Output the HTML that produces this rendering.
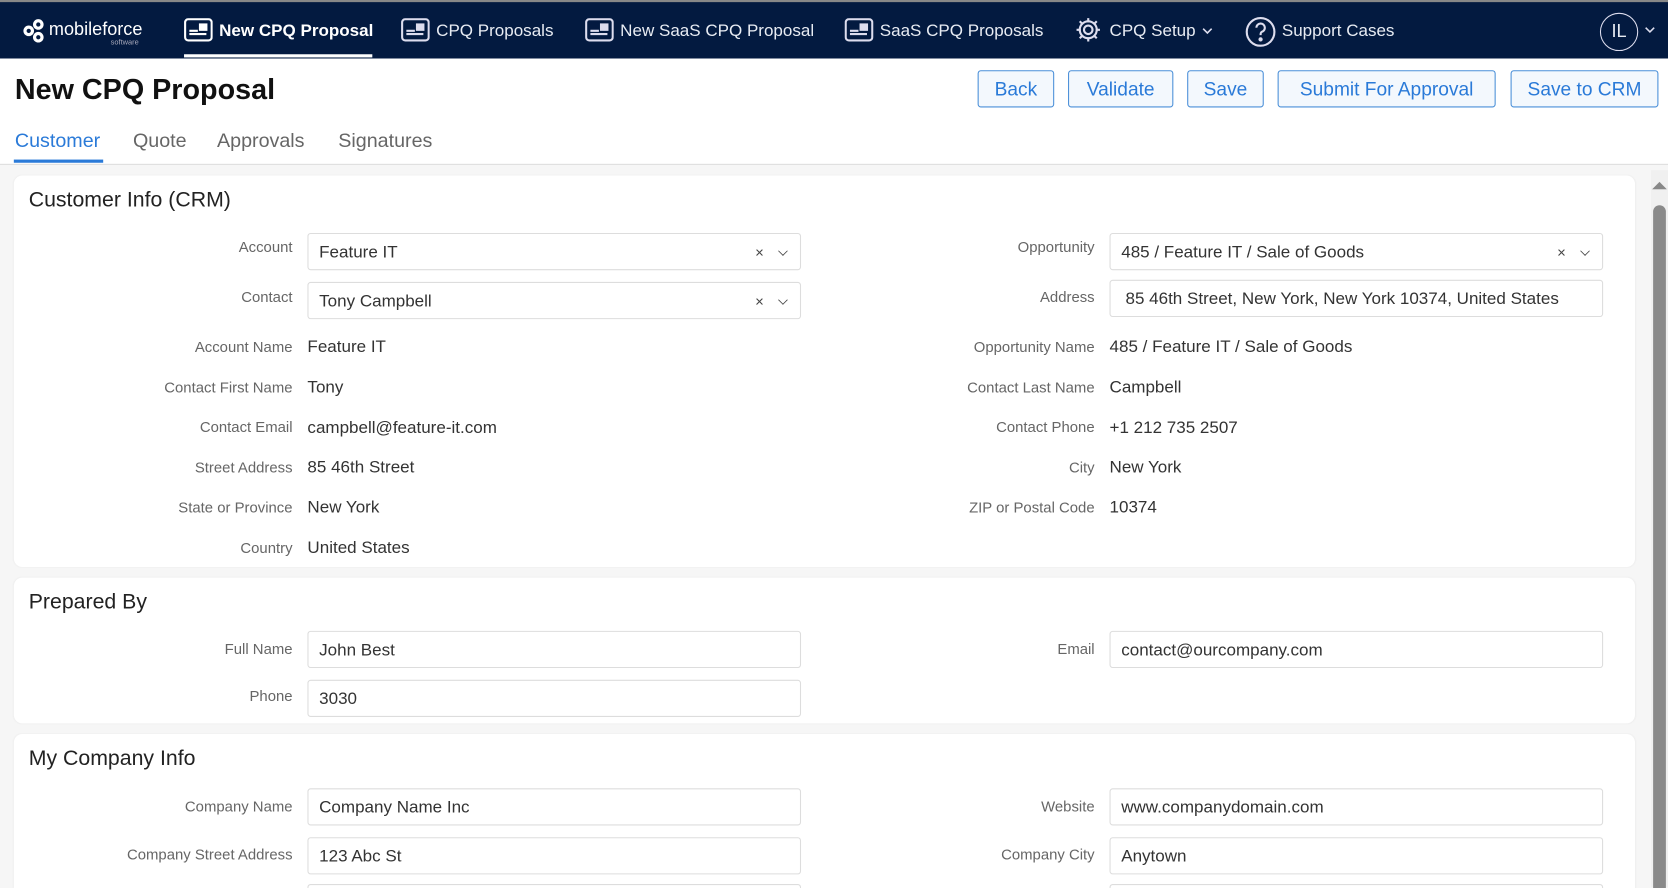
<!DOCTYPE html>
<html><head><meta charset="utf-8">
<style>
*{box-sizing:border-box;margin:0;padding:0}
html,body{width:1668px;height:888px;overflow:hidden;background:#f6f6f6}
#w{position:absolute;left:0;top:0;width:1568px;height:834.7px;transform:scale(1.06378);transform-origin:0 0;font-family:"Liberation Sans",sans-serif;background:#f6f6f6;overflow:hidden}
.nav{position:absolute;left:0;top:0;width:1568px;height:55px;background:#031a40;color:#e8ecf3;font-size:16px;border-top:2px solid #888}
.nav .it{position:absolute;top:19px;white-space:nowrap}
.nav svg{position:absolute}
.hdr{position:absolute;left:0;top:55px;width:1568px;height:100px;background:#fff;border-bottom:1px solid #ddd}
h1{position:absolute;left:14px;top:69px;font-size:27px;font-weight:bold;color:#111}
.btn{position:absolute;top:66px;height:35px;border:1px solid #4a8fd8;border-radius:3px;background:#f3f8fd;color:#2a7ad8;font-size:18px;text-align:center;line-height:35px}
.tab{position:absolute;top:121px;font-size:18.5px;color:#666}
.card{position:absolute;left:13px;width:1524px;background:#fff;border-radius:8px;box-shadow:0 0 2px rgba(0,0,0,.06)}
.card h2{position:absolute;left:14px;font-size:20px;font-weight:normal;color:#222}
.l{position:absolute;font-size:14px;color:#666;text-align:right;width:250px}
.v{position:absolute;font-size:16px;color:#333;margin-top:2px}
.in{position:absolute;height:35px;border:1px solid #ddd;border-radius:3px;background:#fff;font-size:16px;color:#333;padding-left:10px;line-height:35px}
.x{position:absolute;right:34px;top:0;font-size:14px;color:#444}
.ch{position:absolute;right:12px;top:12px;width:8px;height:8px;border-right:1.5px solid #444;border-bottom:1.5px solid #444;transform:rotate(45deg) scale(.8)}
</style></head><body><div id="w">
<div class="nav">
 <svg style="left:20px;top:15px" width="26" height="24" viewBox="0 0 26 24" fill="none" stroke="#fff" stroke-width="3"><circle cx="7" cy="12" r="3.5"/><circle cx="16" cy="6" r="3.5"/><circle cx="16" cy="18" r="3.5"/></svg>
 <div class="it" style="left:46px;top:16px;font-size:17px;color:#fff">mobileforce</div>
 <div class="it" style="left:104px;top:35px;font-size:7px;color:#aab">software</div>
 <svg style="left:173px;top:15px" width="27" height="22" viewBox="0 0 27 22" fill="none" stroke="#fff" stroke-width="2"><rect x="1" y="1" width="25" height="20" rx="3"/><rect x="15" y="6" width="6" height="5" fill="#fff"/><path d="M5 12h8M5 15h16"/></svg>
 <div class="it" style="left:206px;font-weight:bold;color:#fff">New CPQ Proposal</div>
 <div style="position:absolute;left:173px;top:49px;width:177px;height:3px;background:#fff"></div>
 <svg style="left:377px;top:15px" width="27" height="22" viewBox="0 0 27 22" fill="none" stroke="#dde" stroke-width="2"><rect x="1" y="1" width="25" height="20" rx="3"/><rect x="15" y="6" width="6" height="5" fill="#dde"/><path d="M5 12h8M5 15h16"/></svg>
 <div class="it" style="left:410px">CPQ Proposals</div>
 <svg style="left:550px;top:15px" width="27" height="22" viewBox="0 0 27 22" fill="none" stroke="#dde" stroke-width="2"><rect x="1" y="1" width="25" height="20" rx="3"/><rect x="15" y="6" width="6" height="5" fill="#dde"/><path d="M5 12h8M5 15h16"/></svg>
 <div class="it" style="left:583px">New SaaS CPQ Proposal</div>
 <svg style="left:794px;top:15px" width="27" height="22" viewBox="0 0 27 22" fill="none" stroke="#dde" stroke-width="2"><rect x="1" y="1" width="25" height="20" rx="3"/><rect x="15" y="6" width="6" height="5" fill="#dde"/><path d="M5 12h8M5 15h16"/></svg>
 <div class="it" style="left:827px">SaaS CPQ Proposals</div>
 <svg style="left:1010px;top:13px" width="26" height="26" viewBox="0 0 26 26" fill="none" stroke="#dde" stroke-width="2"><circle cx="13" cy="13" r="4"/><path d="M13 2v4M13 20v4M2 13h4M20 13h4M5 5l3 3M18 18l3 3M5 21l3-3M18 8l3-3"/><circle cx="13" cy="13" r="8"/></svg>
 <div class="it" style="left:1043px">CPQ Setup</div>
 <svg style="left:1130px;top:24px" width="10" height="7" viewBox="0 0 10 7" fill="none" stroke="#dde" stroke-width="1.5"><path d="M1 1l4 4 4-4"/></svg>
 <svg style="left:1170px;top:13px" width="30" height="30" viewBox="0 0 30 30" fill="none" stroke="#dde" stroke-width="2"><circle cx="15" cy="15" r="13"/><path d="M11 11a4 4 0 1 1 5 4c-1 .5-1 1.5-1 3"/><circle cx="15" cy="22" r="1" fill="#dde"/></svg>
 <div class="it" style="left:1205px">Support Cases</div>
 <div style="position:absolute;left:1504px;top:10px;width:36px;height:36px;border:1.5px solid #dde;border-radius:50%;text-align:center;line-height:33px;font-size:17px">IL</div>
 <svg style="left:1546px;top:23px" width="10" height="7" viewBox="0 0 10 7" fill="none" stroke="#dde" stroke-width="1.5"><path d="M1 1l4 4 4-4"/></svg>
</div>
<div class="hdr"></div>
<h1>New CPQ Proposal</h1>
<div class="btn" style="left:919px;width:72px">Back</div>
<div class="btn" style="left:1004px;width:99px">Validate</div>
<div class="btn" style="left:1116px;width:72px">Save</div>
<div class="btn" style="left:1201px;width:205px">Submit For Approval</div>
<div class="btn" style="left:1420px;width:139px">Save to CRM</div>
<div class="tab" style="left:14px;color:#2a7ad8">Customer</div>
<div style="position:absolute;left:13px;top:150px;width:84px;height:3px;background:#2a7ad8"></div>
<div class="tab" style="left:125px">Quote</div>
<div class="tab" style="left:204px">Approvals</div>
<div class="tab" style="left:318px">Signatures</div>
<div style="position:absolute;left:1552px;top:160px;width:16px;height:674px;background:#f0f0f0"></div>
<svg style="position:absolute;left:1553px;top:170px" width="14" height="8"><path d="M0 8L7 1 14 8z" fill="#888"/></svg>
<div style="position:absolute;left:1554px;top:193px;width:12px;height:642px;background:#8a8a8a;border-radius:6px 6px 0 0"></div>

<div class="card" style="top:165px;height:368px">
 <h2 style="top:12px">Customer Info (CRM)</h2>
 <div class="l" style="left:12px;top:59px">Account</div>
 <div class="in" style="left:276px;top:54px;width:464px">Feature IT<span class="x">×</span><span class="ch"></span></div>
 <div class="l" style="left:12px;top:106px">Contact</div>
 <div class="in" style="left:276px;top:100px;width:464px">Tony Campbell<span class="x">×</span><span class="ch"></span></div>
 <div class="l" style="left:766px;top:59px">Opportunity</div>
 <div class="in" style="left:1030px;top:54px;width:464px">485 / Feature IT / Sale of Goods<span class="x">×</span><span class="ch"></span></div>
 <div class="l" style="left:766px;top:106px">Address</div>
 <div class="in" style="left:1030px;top:98px;width:464px;padding-left:14px">85 46th Street, New York, New York 10374, United States</div>
 <div class="l" style="left:12px;top:153px">Account Name</div><div class="v" style="left:276px;top:151px">Feature IT</div>
 <div class="l" style="left:12px;top:191px">Contact First Name</div><div class="v" style="left:276px;top:189px">Tony</div>
 <div class="l" style="left:12px;top:228px">Contact Email</div><div class="v" style="left:276px;top:227px">campbell@feature-it.com</div>
 <div class="l" style="left:12px;top:266px">Street Address</div><div class="v" style="left:276px;top:264px">85 46th Street</div>
 <div class="l" style="left:12px;top:304px">State or Province</div><div class="v" style="left:276px;top:302px">New York</div>
 <div class="l" style="left:12px;top:342px">Country</div><div class="v" style="left:276px;top:340px">United States</div>
 <div class="l" style="left:766px;top:153px">Opportunity Name</div><div class="v" style="left:1030px;top:151px">485 / Feature IT / Sale of Goods</div>
 <div class="l" style="left:766px;top:191px">Contact Last Name</div><div class="v" style="left:1030px;top:189px">Campbell</div>
 <div class="l" style="left:766px;top:228px">Contact Phone</div><div class="v" style="left:1030px;top:227px">+1 212 735 2507</div>
 <div class="l" style="left:766px;top:266px">City</div><div class="v" style="left:1030px;top:264px">New York</div>
 <div class="l" style="left:766px;top:304px">ZIP or Postal Code</div><div class="v" style="left:1030px;top:302px">10374</div>
</div>

<div class="card" style="top:543px;height:137px">
 <h2 style="top:12px">Prepared By</h2>
 <div class="l" style="left:12px;top:59px">Full Name</div>
 <div class="in" style="left:276px;top:50px;width:464px">John Best</div>
 <div class="l" style="left:12px;top:103px">Phone</div>
 <div class="in" style="left:276px;top:96px;width:464px">3030</div>
 <div class="l" style="left:766px;top:59px">Email</div>
 <div class="in" style="left:1030px;top:50px;width:464px">contact@ourcompany.com</div>
</div>

<div class="card" style="top:690px;height:145px;border-radius:8px 8px 0 0;overflow:hidden">
 <h2 style="top:12px">My Company Info</h2>
 <div class="l" style="left:12px;top:60px">Company Name</div>
 <div class="in" style="left:276px;top:51px;width:464px">Company Name Inc</div>
 <div class="l" style="left:12px;top:105px">Company Street Address</div>
 <div class="in" style="left:276px;top:97px;width:464px">123 Abc St</div>
 <div class="in" style="left:276px;top:141px;width:464px"></div>
 <div class="l" style="left:766px;top:60px">Website</div>
 <div class="in" style="left:1030px;top:51px;width:464px">www.companydomain.com</div>
 <div class="l" style="left:766px;top:105px">Company City</div>
 <div class="in" style="left:1030px;top:97px;width:464px">Anytown</div>
 <div class="in" style="left:1030px;top:141px;width:464px"></div>
</div>
</div></body></html>
